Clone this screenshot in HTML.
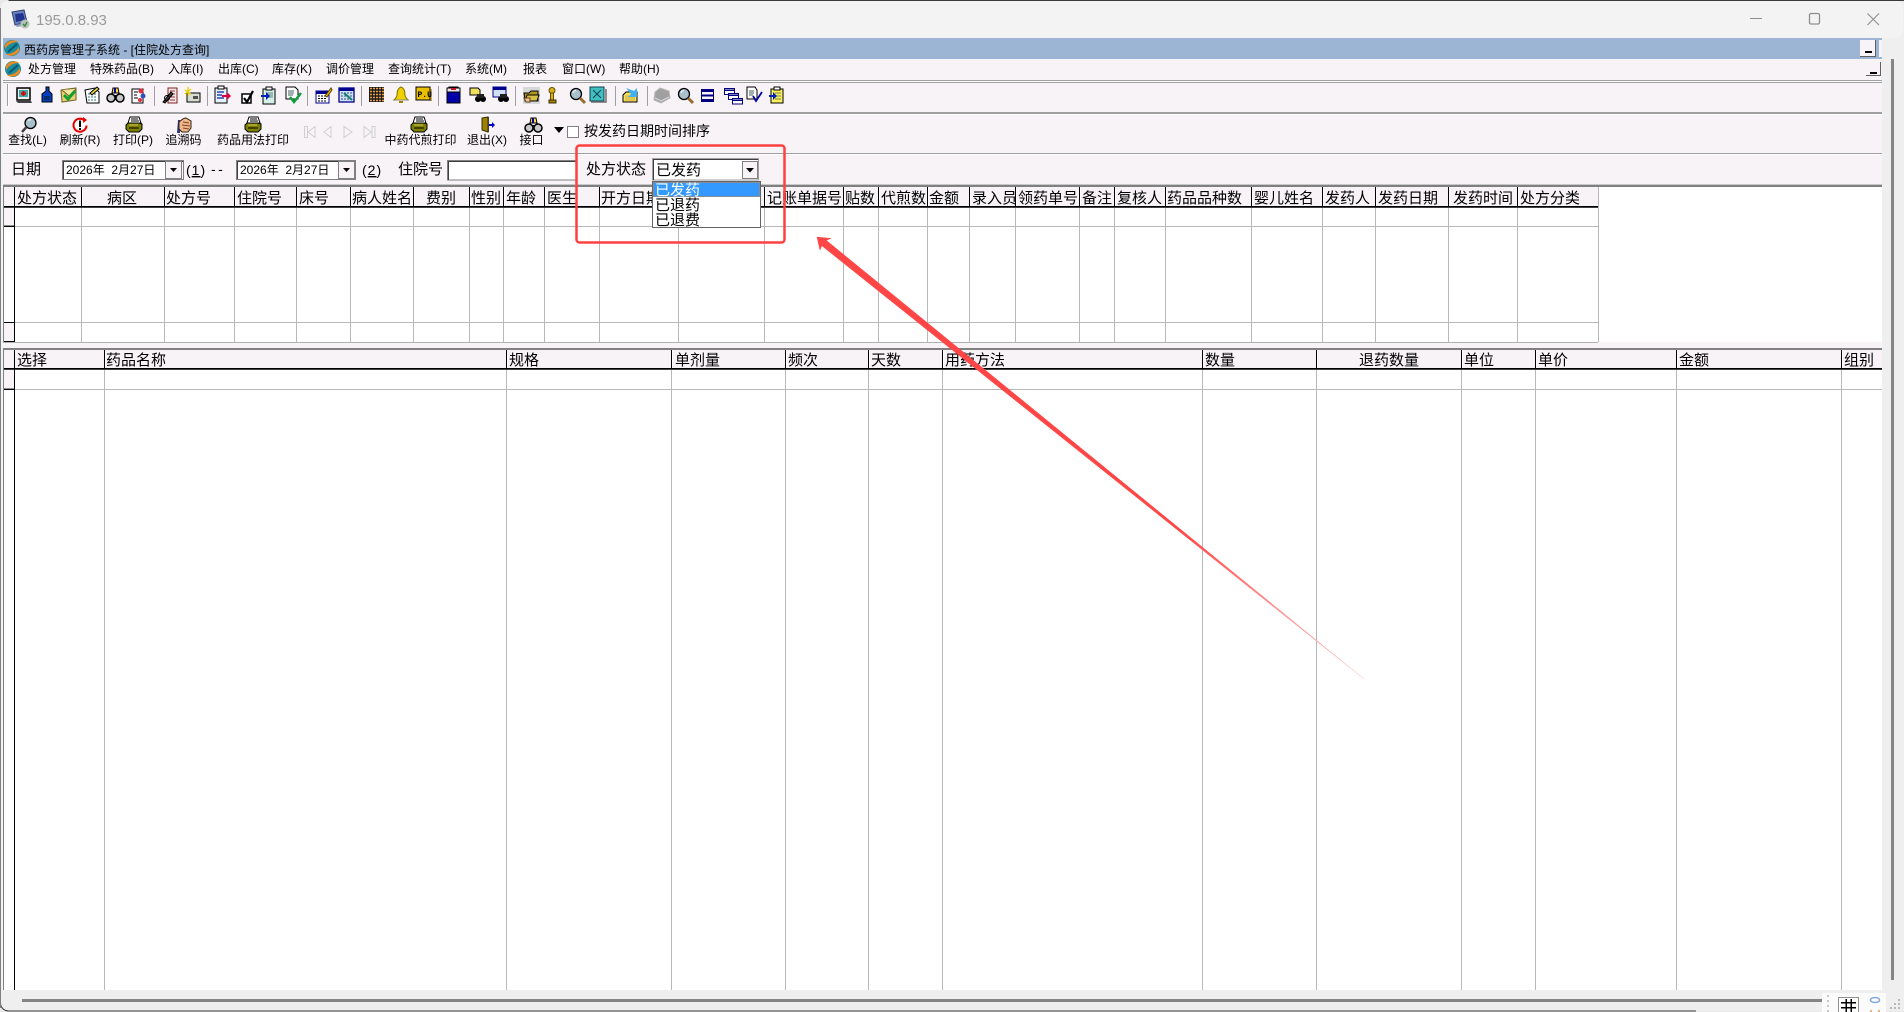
<!DOCTYPE html>
<html lang="zh"><head><meta charset="utf-8"><title>195.0.8.93</title>
<style>
html,body{margin:0;padding:0;width:1904px;height:1012px;overflow:hidden;background:#e9e9e9}
svg{display:block;position:absolute;left:0;top:0}
text{font-family:"WenQuanYi Zen Hei","Liberation Sans","Noto Sans CJK SC",sans-serif;fill:#000}
.m{font-size:12px}.h{font-size:15px}.l{font-size:14px}
.c{shape-rendering:crispEdges}
</style></head><body>
<svg width="1904" height="1012" viewBox="0 0 1904 1012" xmlns="http://www.w3.org/2000/svg">
<defs>
<linearGradient id="tail" gradientUnits="userSpaceOnUse" x1="1180" y1="530" x2="1364" y2="679"><stop offset="0" stop-color="#ff4646"/><stop offset="1" stop-color="#ffc8c8"/></linearGradient>
<g id="logo"><circle cx="8" cy="8" r="8" fill="#1d8c9c"/><path d="M1 5C4 0 11-1 14 2 10 2 5 3 1 9zM15 11C12 16 5 17 2 14 6 14 11 13 15 7z" fill="#f08a1c"/><path d="M4 12C7 9 10 7 13 4" stroke="#0a5a70" stroke-width="2" fill="none"/></g>
<g id="printer"><path d="M4 0H13L15 6H2z" fill="#fff" stroke="#000"/><path d="M5 2H12M5 4H13" stroke="#000"/><path d="M2 6H13L16 7V12L13 15H3L0 12V8z" fill="#808000" stroke="#000"/><path d="M3 11H13" stroke="#000"/><path d="M3 8H12" stroke="#c8c860"/></g>
<g id="binoc"><path d="M6 1H11L12 6H5z" fill="#ffe040" stroke="#000"/><path d="M8 1V6" stroke="#00008c" stroke-width="2"/><circle cx="4" cy="11" r="4" fill="#c8c8c8" stroke="#000" stroke-width="1.5"/><circle cx="13" cy="11" r="4" fill="#c8c8c8" stroke="#000" stroke-width="1.5"/><path d="M7 9H10" stroke="#000" stroke-width="2"/></g>
<g id="mag"><circle cx="9.500" cy="6" r="5.500" fill="#a9c0cc" stroke="#000" stroke-width="1.300"/><path d="M5.500 10L1 15" stroke="#444" stroke-width="2.500"/><path d="M7 3.500A3 3 0 0 1 10 3" stroke="#fff" fill="none"/></g>
<g id="mag2"><circle cx="7" cy="7" r="5.500" fill="#a9c0cc" stroke="#000" stroke-width="1.300"/><path d="M11 11L16 16" stroke="#9a6a30" stroke-width="3"/><path d="M4 6A3 3 0 0 1 7 3.500" stroke="#fff" fill="none"/></g>
<g id="clip"><rect x="2" y="2" width="12" height="15" fill="#d5efe6" stroke="#000"/><rect x="5" y="0" width="6" height="3" fill="#fff" stroke="#000"/><path d="M6 6H12M6 8H12M6 10H12" stroke="#608070"/></g>
</defs>

<!-- window frame -->
<rect x="0" y="0" width="1904" height="1012" fill="#e9e9e9"/>
<rect x="0.500" y="0.500" width="1910" height="1010.500" rx="8" fill="#efefef" stroke="#3a3a3a" stroke-dasharray="1920 1200"/>
<rect x="1" y="1" width="1902" height="37" rx="7" fill="#f3f3f3"/>
<rect x="0" y="8" width="1" height="1000" fill="#7f8084"/>
<rect x="1" y="38" width="2" height="952" fill="#f3f3f3"/>
<!-- title icon -->
<g transform="translate(12,10)"><path d="M0 2L12 0 15 12 3 15z" fill="#6682c0" stroke="#30406a"/><path d="M3 4L11 3 13 10 4 12z" fill="#20348c"/><path d="M3 15L15 13 16 15 5 17z" fill="#8fa0c0"/><circle cx="13" cy="14" r="4.500" fill="#b8c0b8"/><path d="M11 14L13 16 15 12" stroke="#2a8a3a" fill="none" stroke-width="1.300"/></g>
<text x="36" y="25" style="font-family:'Liberation Sans',sans-serif;font-size:15px;fill:#9a9a9a">195.0.8.93</text>
<g class="c"><rect x="1750" y="18" width="12" height="1" fill="#8e8e8e"/></g>
<rect x="1809.500" y="13.500" width="10" height="10.500" rx="1.500" fill="none" stroke="#8e8e8e" stroke-width="1.300"/>
<path d="M1867.500 13.500L1879 25M1879 13.500L1867.500 25" stroke="#8e8e8e" stroke-width="1.100"/>

<!-- app -->
<rect x="3" y="38" width="1879" height="952" fill="#f7f3f7" class="c"/>
<rect x="3" y="38" width="1879" height="21" fill="#9cb5d5" class="c"/>
<use href="#logo" x="4" y="40"/>
<text class="m" x="24" y="54">西药房管理子系统 - [住院处方查询]</text>
<g class="c"><rect x="1860" y="40" width="16" height="17" fill="#f7f3f7"/><path d="M1860 56.500H1876M1875.500 40V57" stroke="#606060"/><rect x="1865" y="51" width="7" height="2" fill="#000"/><rect x="1879" y="40" width="3" height="17" fill="#f7f3f7"/></g>
<use href="#logo" x="5" y="61"/>
<g class="m">
<text x="28" y="73">处方管理</text><text x="90" y="73">特殊药品(B)</text><text x="168" y="73">入库(I)</text><text x="218" y="73">出库(C)</text><text x="272" y="73">库存(K)</text><text x="326" y="73">调价管理</text><text x="388" y="73">查询统计(T)</text><text x="465" y="73">系统(M)</text><text x="523" y="73">报表</text><text x="562" y="73">窗口(W)</text><text x="619" y="73">帮助(H)</text>
</g>
<g class="c"><rect x="1866" y="62" width="15" height="14" fill="#f7f3f7"/><path d="M1866 75.500H1881M1880.500 62V76" stroke="#606060"/><rect x="1870" y="72" width="7" height="2" fill="#000"/></g>
<g class="c" fill="none">
<path d="M3 80.500H1882" stroke="#a0a0a0"/><path d="M3 81.500H1882" stroke="#fff"/><path d="M3 82.500H1882" stroke="#a0a0a0"/>
<path d="M3 112.500H1882" stroke="#a0a0a0"/><path d="M3 113.500H1882" stroke="#a0a0a0"/><path d="M3 114.500H1882" stroke="#fff"/>
<path d="M3 153.500H1882" stroke="#a0a0a0"/><path d="M3 154.500H1882" stroke="#fff"/>
<path d="M7.500 84V106" stroke="#a0a0a0"/><path d="M8.500 84V106" stroke="#fff"/>
<path d="M154.500 86V106M207.500 86V106M307.500 86V106M361.500 86V106M438.500 86V106M515.500 86V106M615.500 86V106M647.500 86V106" stroke="#a0a0a0"/>
</g>

<!-- toolbar 1 icons -->
<g transform="translate(16,87)"><rect x="1" y="1" width="13" height="12" fill="#e8f0ee" stroke="#000" stroke-width="1.500"/><rect x="3" y="3" width="9" height="7" fill="#40a8a8"/><path d="M5 6.500H10M7.500 4V9" stroke="#e00000" stroke-width="2"/><path d="M0 14H15L16 16H2z" fill="#444"/></g>
<g transform="translate(40,87)"><path d="M6 0H9V4L12 7V15H2V7L6 4z" fill="#0040c0" stroke="#000"/><path d="M4 9H10V13H4z" fill="#0a2a70"/></g>
<g transform="translate(61,87)"><path d="M0 3L15 1V13L1 15z" fill="#e8d070" stroke="#706020"/><path d="M1 3L8 9 15 2" fill="#f4e8a0" stroke="#706020"/><path d="M3 8L7 12 14 4" stroke="#10a030" stroke-width="3" fill="none"/></g>
<g transform="translate(84,87)"><path d="M1 3L11 1 15 5V16H3z" fill="#fff" stroke="#000"/><path d="M4 7H12M4 10H12M4 13H12" stroke="#2a7a7a" stroke-dasharray="2 1"/><path d="M6 6L13 0 15 2 8 8z" fill="#e8d040" stroke="#000"/></g>
<use href="#binoc" x="107" y="87"/>
<g transform="translate(130,87)"><rect x="2" y="2" width="11" height="14" fill="#fff" stroke="#000"/><path d="M4 5H8M4 8H7M4 11H8" stroke="#000"/><circle cx="11" cy="4" r="2.500" fill="#e03040"/><circle cx="13" cy="9" r="2.500" fill="#3050c0"/><circle cx="10" cy="13" r="2" fill="#e03040"/></g>
<g transform="translate(162,87)"><path d="M6 1H15V16H6z" fill="#f0e8e8" stroke="#802020"/><path d="M8 4H13M8 7H13M8 10H13M8 13H13" stroke="#a03030"/><path d="M1 15L9 5 11 7 3 16z" fill="#404040" stroke="#000"/><circle cx="5" cy="11" r="2.500" fill="none" stroke="#000"/></g>
<g transform="translate(185,87)"><rect x="2" y="6" width="13" height="9" fill="#d8dcd0" stroke="#000"/><rect x="8" y="9" width="5" height="3" fill="#505050"/><path d="M3 0V9M0 3L6 7M6 2L0 7" stroke="#e8d000" stroke-width="1.300"/></g>
<g transform="translate(214,86)"><rect x="1" y="2" width="12" height="15" fill="#e8f0fa" stroke="#000"/><rect x="4" y="0" width="6" height="3" fill="#fff" stroke="#000"/><path d="M3 6H10M3 9H8M3 12H10" stroke="#0020a0" stroke-width="1.300"/><path d="M8 9H13V6L17 10 13 14V11H8z" fill="#e0003c"/></g>
<g transform="translate(241,92)"><rect x="1" y="2" width="9" height="9" fill="#fff" stroke="#000" stroke-width="1.500"/><path d="M3 6L6 10 12-1" stroke="#000" stroke-width="2.200" fill="none"/></g>
<g transform="translate(261,87)"><use href="#clip"/><path d="M0 8H5V5L9 9 5 13V10H0z" fill="#0020c0"/></g>
<g transform="translate(285,87)"><path d="M1 0H10L13 3V12H1z" fill="#fff" stroke="#000"/><path d="M3 4H9M3 6H9M3 8H8" stroke="#406060"/><path d="M5 10L9 15 16 6" stroke="#10a040" stroke-width="2.500" fill="none"/></g>
<g transform="translate(316,88)"><rect x="0" y="3" width="13" height="12" fill="#fff" stroke="#000090"/><rect x="0" y="3" width="13" height="3" fill="#000090"/><path d="M2 8H11M2 10.500H11M2 13H11" stroke="#000" stroke-dasharray="2 1"/><path d="M9 8L15 0 16 2 11 9z" fill="#e8c000" stroke="#604000"/></g>
<g transform="translate(339,88)"><rect x="0" y="0" width="15" height="14" fill="#d0e0f0" stroke="#000090" stroke-width="1.300"/><rect x="0" y="0" width="15" height="3" fill="#000090"/><path d="M2 5H13M2 8H13M2 11H13" stroke="#305080" stroke-dasharray="2 1"/><path d="M5 5L13 12" stroke="#108070" stroke-width="2"/></g>
<g transform="translate(369,87)"><rect width="15" height="15" fill="#1a1a1a"/><path d="M1 1.500H15M1 4.500H15M1 7.500H15M1 10.500H15M1 13.500H15" stroke="#e8a040" stroke-width="1.500" stroke-dasharray="2 1"/></g>
<g transform="translate(393,87)"><path d="M8 0C5 1 4 4 4 8 4 10 2 12 1 13H15C14 12 12 10 12 8 12 4 11 1 8 0z" fill="#f0d000" stroke="#807000"/><path d="M6 14H10V16H6z" fill="#a08000"/><path d="M2 13H16" stroke="#888"/></g>
<g transform="translate(416,87)"><rect x="0" y="0" width="14" height="13" fill="#e8c000" stroke="#000"/><rect x="14" y="2" width="1.500" height="12" fill="#806000"/><text x="1.500" y="10" style="font-family:'Liberation Mono',monospace;font-size:8px;font-weight:bold">P.U</text></g>
<g transform="translate(446,87)"><path d="M3 0H12L14 4V16H1V4z" fill="#0000a8" stroke="#000"/><rect x="1" y="1" width="13" height="4" fill="#e8e8e8" stroke="#000"/><path d="M5 2H10" stroke="#d01030" stroke-width="2"/></g>
<g transform="translate(470,87)"><path d="M0 1H8L10 3V8H0z" fill="#f0e060" stroke="#000"/><circle cx="8" cy="12" r="3" fill="#000"/><circle cx="13" cy="12" r="3" fill="#000"/><path d="M7 7H14V11H7z" fill="#202020"/></g>
<g transform="translate(493,87)"><rect x="0" y="0" width="13" height="10" fill="#d0e0f0" stroke="#000090"/><rect width="13" height="3" fill="#000090"/><circle cx="8" cy="12" r="3" fill="#000"/><circle cx="13" cy="12" r="3" fill="#000"/><path d="M7 7H14V11H7z" fill="#202020"/></g>
<rect x="523" y="87" width="17" height="17" fill="#d8d8d8" class="c"/>
<g transform="translate(524,88)"><path d="M0 5H5L7 3H14V13H1z" fill="#b09820" stroke="#000"/><path d="M1 13L3 7H15L13 13z" fill="#d8c040" stroke="#000"/><path d="M0 10H6V14H2z" fill="#f0c8a0" stroke="#604020"/></g>
<g transform="translate(545,87)"><circle cx="7" cy="3.500" r="3" fill="#d8b020" stroke="#605000"/><rect x="5.500" y="6" width="3" height="8" fill="#d8b020" stroke="#605000"/><rect x="4" y="13" width="7" height="3" fill="#a08010" stroke="#403000"/></g>
<use href="#mag2" x="569" y="87"/>
<g transform="translate(590,87)"><rect x="0" y="0" width="14" height="14" fill="#40c0c0" stroke="#104050"/><path d="M3 3L11 11M11 3L3 11" stroke="#104050"/><path d="M1 15H16V2" stroke="#707070" stroke-width="1.500" fill="none"/></g>
<g transform="translate(623,87)"><path d="M0 8L3 5H14V15H0z" fill="#f8e060" stroke="#000"/><path d="M2 9H12M2 11H12M2 13H12" stroke="#c8b040" /><path d="M3 1L11 4 14 1V10H5L8 7z" fill="#40b0f0"/></g>
<g transform="translate(654,87)"><path d="M6 1L15 4 16 11 7 16 0 13 1 5z" fill="#a0a0a0" stroke="#b8b8b8"/><path d="M1 11L7 14 15 10" stroke="#d8d8d8" fill="none"/></g>
<use href="#mag2" x="677" y="87"/>
<g class="c" fill="none" stroke="#000080"><rect x="701.500" y="89.500" width="12" height="12" stroke-width="1"/><path d="M702 91H713" stroke-width="2"/><path d="M702 95.500H713" stroke-width="2"/><path d="M702 100H713" stroke-width="2"/></g>
<g class="c" fill="#fff" stroke="#000080"><rect x="724.500" y="88.500" width="10" height="6"/><rect x="728.500" y="93.500" width="10" height="6"/><rect x="732.500" y="98.500" width="10" height="5.500"/><path d="M725 90H734M729 95H738M733 100H742" stroke-width="1.500"/></g>
<g transform="translate(747,87)"><path d="M0 0H8L10 3V12H0z" fill="#fff" stroke="#000"/><path d="M2 4H7M2 6H7M2 8H6" stroke="#406060"/><path d="M6 9L9 14 15 5" stroke="#0000a0" stroke-width="1.800" fill="none"/></g>
<g transform="translate(769,87)"><rect x="2" y="2" width="12" height="14" fill="#f8f060" stroke="#000"/><rect x="5" y="0" width="6" height="3" fill="#fff" stroke="#000"/><path d="M6 6H12M6 9H12M6 12H12" stroke="#808040"/><path d="M0 8H4V5L8 9 4 13V10H0z" fill="#0020c0"/></g>

<!-- toolbar 2 -->
<use href="#mag" x="21" y="117"/>
<g transform="translate(72,117)"><path d="M12.500 3.500A6.500 6.500 0 1 0 14.500 8.500" fill="#fff" stroke="#e80000" stroke-width="2"/><path d="M11 0L15 3 11 6z" fill="#e80000"/><path d="M8 3.500V10" stroke="#000" stroke-width="2"/><rect x="7" y="11" width="2" height="2" fill="#000"/></g>
<use href="#printer" x="126" y="117"/>
<g transform="translate(176,117)"><path d="M2 3H4V16H1z" fill="#303880"/><path d="M3 5C6 3 7 1 10 1L15 4V11L12 15H6L3 12z" fill="#f0b890" stroke="#302010"/><path d="M7 5L13 6M6 8L14 9M7 11L13 12" stroke="#804020"/></g>
<use href="#printer" x="245" y="117"/>
<g fill="#f7f3f7" stroke="#d0d0d0" transform="translate(0,-1)"><path d="M304.500 127.500V138.500H307.500V127.500zM315 127.500L308 133 315 138.500z"/><path d="M331 127.500L324 133 331 138.500z"/><path d="M344 127.500L352 133 344 138.500z"/><path d="M364 127.500L371 133 364 138.500zM372 127.500V138.500H375V127.500z"/></g>
<use href="#printer" x="411" y="117"/>
<g transform="translate(482,117)"><path d="M0 1L6 0V15L0 13z" fill="#a08000" stroke="#303000"/><rect x="6" y="0" width="1" height="15" fill="#404040"/><path d="M7 7H10V5L13 8 10 11V9H7z" fill="#0000c0"/></g>
<use href="#binoc" x="525" y="117"/>
<g class="m" text-anchor="middle">
<text x="27.500" y="144">查找(L)</text><text x="80" y="144">刷新(R)</text><text x="133" y="144">打印(P)</text><text x="183.500" y="144">追溯码</text><text x="253" y="144">药品用法打印</text><text x="420.500" y="144">中药代煎打印</text><text x="487" y="144">退出(X)</text><text x="531.500" y="144">接口</text>
</g>
<path d="M554 127H564L559 133z" fill="#000"/>
<g class="c"><rect x="567.500" y="126.500" width="11" height="11" fill="#fff" stroke="#808080"/></g>
<text class="l" x="584" y="136">按发药日期时间排序</text>

<!-- filter row -->
<text class="h" x="11" y="174">日期</text>
<g class="c">
<rect x="62.500" y="160.500" width="121" height="19" fill="#fff" stroke="#808080"/>
<rect x="63" y="161" width="120" height="1" fill="#404040"/><rect x="63" y="161" width="1" height="18" fill="#404040"/>
<rect x="165.500" y="161.500" width="16" height="17" fill="#f7f3f7" stroke="#808080"/>
<rect x="236.500" y="160.500" width="119" height="19" fill="#fff" stroke="#808080"/>
<rect x="237" y="161" width="118" height="1" fill="#404040"/><rect x="237" y="161" width="1" height="18" fill="#404040"/>
<rect x="338.500" y="161.500" width="16" height="17" fill="#f7f3f7" stroke="#808080"/>
<rect x="447.500" y="160.500" width="129" height="19.500" fill="#fff" stroke="#808080"/>
<rect x="448" y="161" width="128" height="1" fill="#404040"/><rect x="448" y="161" width="1" height="19" fill="#404040"/>
</g>
<path d="M170 168H177L173.500 172zM343 168H350L346.500 172z" fill="#000"/>
<text class="m" x="66" y="174">2026年&#160;&#160;2月27日</text>
<text class="m" x="240" y="174">2026年&#160;&#160;2月27日</text>
<text class="l" x="186" y="175" letter-spacing="1">(<tspan text-decoration="underline">1</tspan>)</text><text class="l" x="211" y="174" letter-spacing="2.500">--</text><text class="l" x="362" y="175" letter-spacing="1">(<tspan text-decoration="underline">2</tspan>)</text>
<text class="h" x="398" y="174">住院号</text>
<text class="h" x="586" y="174">处方状态</text>

<!-- grid 1 -->
<g class="c">
<rect x="14" y="187" width="1584" height="155" fill="#fff"/>
<rect x="1598" y="187" width="284" height="155" fill="#fff"/>
<rect x="3" y="226" width="11" height="96" fill="#fff"/>
<rect x="3" y="184" width="1879" height="1" fill="#c8c8c8"/>
<rect x="3" y="185" width="1879" height="2" fill="#808080"/>
<rect x="3" y="187" width="1595" height="19" fill="#f7f3f7"/>
<rect x="3" y="206" width="1595" height="1" fill="#000"/>
<rect x="3" y="207" width="1595" height="1" fill="#404040"/>
<path d="M14.500 187V342" stroke="#000"/>
<path d="M81.500 208V342M164.500 208V342M234.500 208V342M296.500 208V342M350.500 208V342M413.500 208V342M469.500 208V342M503.500 208V342M544.500 208V342M599.500 208V342M678.500 208V342M764.500 208V342M843.500 208V342M878.500 208V342M927.500 208V342M969.500 208V342M1015.500 208V342M1079.500 208V342M1114.500 208V342M1165.500 208V342M1251.500 208V342M1322.500 208V342M1375.500 208V342M1448.500 208V342M1517.500 208V342M1598.500 187V342" stroke="#b8b8b8"/>
<path d="M15 226.500H1598M15 322.500H1598" stroke="#b8b8b8"/>
<path d="M3 342.500H1598" stroke="#b0b0b0"/>
<path d="M81.500 187V206M164.500 187V206M234.500 187V206M296.500 187V206M350.500 187V206M413.500 187V206M469.500 187V206M503.500 187V206M544.500 187V206M599.500 187V206M678.500 187V206M764.500 187V206M843.500 187V206M878.500 187V206M927.500 187V206M969.500 187V206M1015.500 187V206M1079.500 187V206M1114.500 187V206M1165.500 187V206M1251.500 187V206M1322.500 187V206M1375.500 187V206M1448.500 187V206M1517.500 187V206" stroke="#000"/>
<path d="M82.500 187V206M165.500 187V206M235.500 187V206M297.500 187V206M351.500 187V206M414.500 187V206M470.500 187V206M504.500 187V206M545.500 187V206M600.500 187V206M679.500 187V206M765.500 187V206M844.500 187V206M879.500 187V206M928.500 187V206M970.500 187V206M1016.500 187V206M1080.500 187V206M1115.500 187V206M1166.500 187V206M1252.500 187V206M1323.500 187V206M1376.500 187V206M1449.500 187V206M1518.500 187V206" stroke="#fff"/>
<rect x="3" y="208" width="11" height="18" fill="#f7f3f7"/><path d="M3 225.500H14" stroke="#909090"/><path d="M3 226.500H14" stroke="#000"/>
<rect x="3" y="323" width="11" height="19" fill="#f7f3f7"/><path d="M3 322.500H14" stroke="#000"/><path d="M3 341.500H14" stroke="#000"/>
<path d="M3.500 187V342" stroke="#808080"/>
<rect x="3" y="343" width="1879" height="5" fill="#f7f3f7"/>
</g>
<g class="h" transform="translate(-1,0)">
<text x="18" y="203">处方状态</text><text x="108" y="203">病区</text><text x="167" y="203">处方号</text><text x="238" y="203">住院号</text><text x="300" y="203">床号</text><text x="353" y="203">病人姓名</text><text x="427" y="203">费别</text><text x="472" y="203">性别</text><text x="507" y="203">年龄</text><text x="548" y="203">医生</text><text x="602" y="203">开方日期</text><text x="768" y="203">记账单据号</text><text x="846" y="203">贴数</text><text x="882" y="203">代煎数</text><text x="930" y="203">金额</text><text x="973" y="203">录入员</text><text x="1019" y="203">领药单号</text><text x="1083" y="203">备注</text><text x="1118" y="203">复核人</text><text x="1168" y="203">药品品种数</text><text x="1255" y="203">婴儿姓名</text><text x="1326" y="203">发药人</text><text x="1379" y="203">发药日期</text><text x="1454" y="203">发药时间</text><text x="1521" y="203">处方分类</text>
</g>

<!-- grid 2 -->
<g class="c">
<rect x="3" y="350" width="1879" height="640" fill="#fff"/>
<rect x="3" y="348" width="1879" height="2" fill="#808080"/>
<rect x="3" y="350" width="1879" height="18" fill="#f7f3f7"/>
<rect x="3" y="368" width="1879" height="1" fill="#000"/>
<rect x="3" y="369" width="1879" height="1" fill="#404040"/>
<path d="M14.500 350V990" stroke="#000"/>
<path d="M104.500 370V990M506.500 370V990M671.500 370V990M785.500 370V990M868.500 370V990M942.500 370V990M1202.500 370V990M1316.500 370V990M1461.500 370V990M1535.500 370V990M1676.500 370V990M1841.500 370V990" stroke="#b8b8b8"/>
<path d="M15 389.500H1882" stroke="#b8b8b8"/>
<path d="M104.500 350V368M506.500 350V368M671.500 350V368M785.500 350V368M868.500 350V368M942.500 350V368M1202.500 350V368M1316.500 350V368M1461.500 350V368M1535.500 350V368M1676.500 350V368M1841.500 350V368" stroke="#000"/>
<path d="M105.500 350V368M507.500 350V368M672.500 350V368M786.500 350V368M869.500 350V368M943.500 350V368M1203.500 350V368M1317.500 350V368M1462.500 350V368M1536.500 350V368M1677.500 350V368M1842.500 350V368" stroke="#fff"/>
<rect x="3" y="370" width="11" height="19" fill="#f7f3f7"/><path d="M3 388.500H14" stroke="#909090"/><path d="M3 389.500H14" stroke="#000"/>
<path d="M3.500 350V990" stroke="#808080"/>
</g>
<g class="h" transform="translate(-1,0)">
<text x="18" y="365">选择</text><text x="107" y="365">药品名称</text><text x="510" y="365">规格</text><text x="676" y="365">单剂量</text><text x="789" y="365">频次</text><text x="872" y="365">天数</text><text x="946" y="365">用药方法</text><text x="1206" y="365">数量</text><text x="1360" y="365">退药数量</text><text x="1465" y="365">单位</text><text x="1539" y="365">单价</text><text x="1680" y="365">金额</text><text x="1845" y="365">组别</text>
</g>

<!-- combo and dropdown -->
<g class="c">
<rect x="652.500" y="158.500" width="106" height="21.500" fill="#fff" stroke="#a0a0a0"/>
<rect x="653" y="159" width="105" height="1" fill="#404040"/><rect x="653" y="159" width="1" height="21" fill="#404040"/>
<rect x="742.500" y="161.500" width="15" height="17" fill="#f7f3f7" stroke="#808080"/>
<rect x="652.500" y="181.500" width="108" height="46" fill="#fff" stroke="#646464"/>
<rect x="653" y="182" width="107" height="15" fill="#3399ff"/>
<rect x="653.500" y="182.500" width="106" height="14" fill="none" stroke="#d88030" stroke-dasharray="1 1"/>
</g>
<path d="M746 168H754L750 172.500z" fill="#000"/>
<text class="h" x="656" y="175">已发药</text>
<text class="h" x="655" y="195" style="fill:#fff">已发药</text>
<text class="h" x="655" y="210">已退药</text>
<text class="h" x="655" y="225">已退费</text>

<!-- bottom band / scrollbars -->
<g class="c">
<rect x="22" y="999" width="1800" height="3" fill="#858585"/>
<rect x="1891" y="59" width="3" height="921" fill="#858585"/>
<rect x="1822" y="993" width="64" height="19" fill="#fbfbfb"/>
<rect x="1827" y="995" width="2" height="2" fill="#c8c8c8"/><rect x="1827" y="1000" width="2" height="2" fill="#c8c8c8"/><rect x="1827" y="1005" width="2" height="2" fill="#c8c8c8"/><rect x="1827" y="1010" width="2" height="2" fill="#c8c8c8"/>
<rect x="1838.500" y="997.500" width="20" height="15" fill="#fff" stroke="#909090"/>
<path d="M1846 999V1012M1851 999V1012M1841 1002.500H1856M1841 1007.500H1856" stroke="#000" stroke-width="1.500"/>
<rect x="1890" y="1007" width="2" height="2" fill="#b8b8b8"/><rect x="1894" y="1007" width="2" height="2" fill="#b8b8b8"/><rect x="1898" y="1007" width="2" height="2" fill="#b8b8b8"/><rect x="1894" y="1003" width="2" height="2" fill="#b8b8b8"/><rect x="1898" y="1003" width="2" height="2" fill="#b8b8b8"/><rect x="1898" y="999" width="2" height="2" fill="#b8b8b8"/>
</g>
<ellipse cx="1875" cy="1000" rx="4.500" ry="2.500" fill="none" stroke="#80a8d8" stroke-width="1.500"/>
<path d="M1871 1010V1012M1879 1010V1012" stroke="#e0a060" stroke-width="1.500"/>

<!-- annotations -->
<rect x="576.500" y="145.500" width="208" height="97" rx="3" fill="none" stroke="#ff4040" stroke-width="2.500"/>
<path d="M817 237L831 238.500 826.200 240.300 1364 679 821.800 245.700 820 250z" fill="url(#tail)" stroke="url(#tail)" stroke-width=".5" stroke-linejoin="round"/>
</svg>
</body></html>
